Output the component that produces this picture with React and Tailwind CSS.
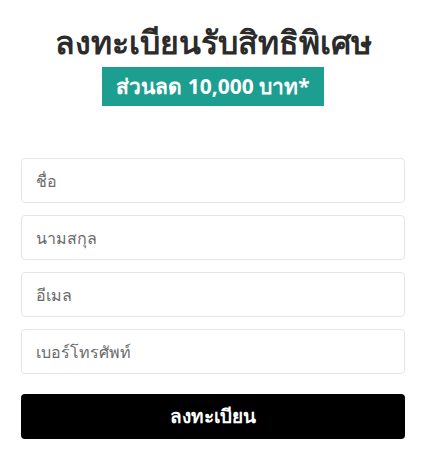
import React from 'react';

const fields = ['ชื่อ', 'นามสกุล', 'อีเมล', 'เบอร์โทรศัพท์'];

const App = () => {
  return (
    <div className="min-h-screen bg-white font-['Noto_Sans',sans-serif]">
      <div className="pl-[21px] pr-[23px] pt-[20px]">
        <div className="flex flex-col items-center">
          <h1 className="text-[32px] leading-[44px] font-bold text-[#2b2b2b]">
            ลงทะเบียนรับสิทธิพิเศษ
          </h1>
          <div className="mt-[3px] bg-[#1c9f90] px-[14px] h-[39px] leading-[39px] text-[21px] font-bold text-white">
            ส่วนลด 10,000 บาท*
          </div>
        </div>

        <form className="mt-[52px] flex flex-col gap-[12px]" onSubmit={(e) => e.preventDefault()}>
          {fields.map((f) => (
            <input
              key={f}
              type="text"
              placeholder={f}
              className="h-[45px] w-full rounded border border-[#e6e6e6] px-[14px] text-[16px] text-[#333] placeholder-[#6b6b6b] outline-none"
            />
          ))}
          <button
            type="submit"
            className="mt-[8px] h-[45px] w-full rounded bg-black text-[19px] font-bold text-white"
          >
            ลงทะเบียน
          </button>
        </form>
      </div>
    </div>
  );
};

export default App;
